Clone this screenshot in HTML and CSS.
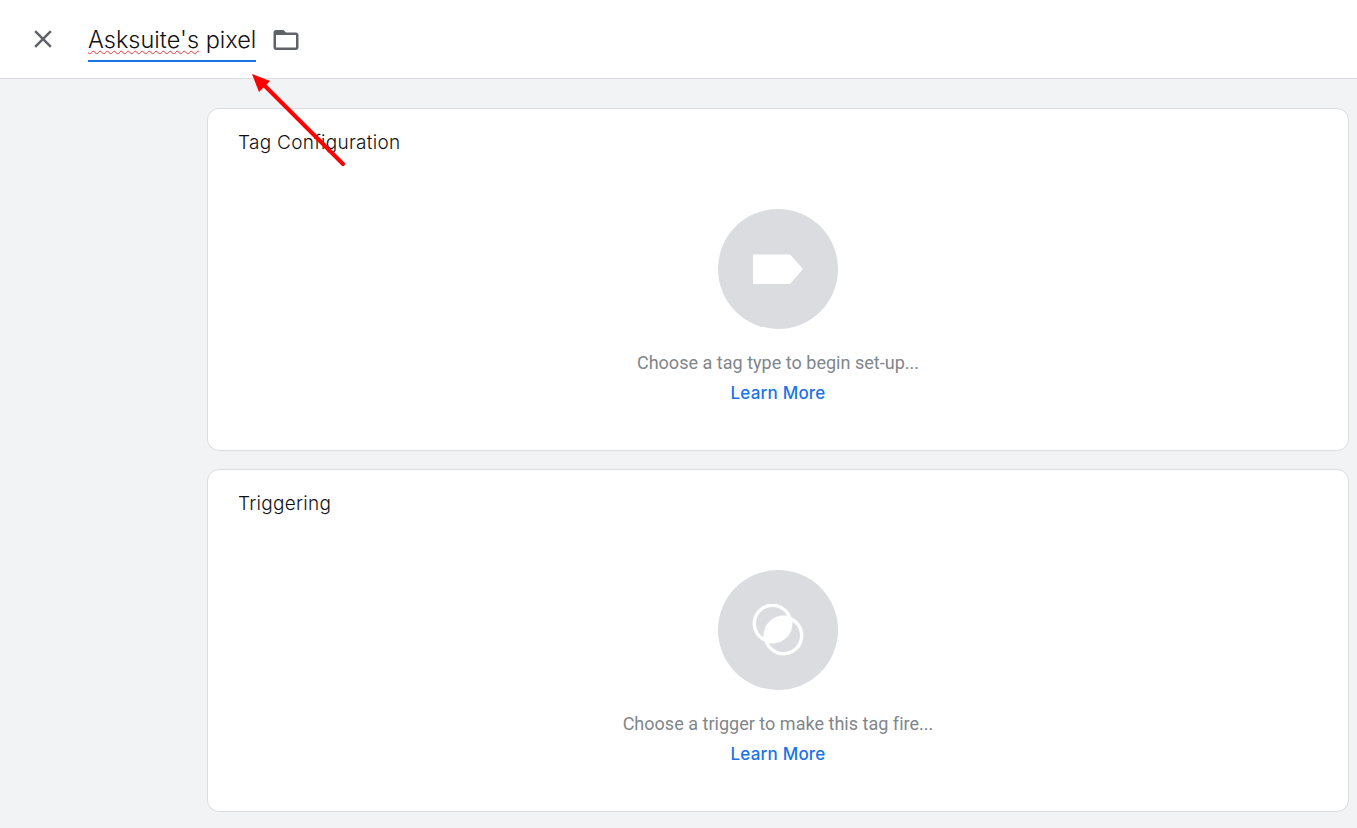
FILE: index.html
```html
<!DOCTYPE html>
<html lang="en">
<head>
<meta charset="utf-8">
<title>Asksuite's pixel</title>
<link rel="stylesheet" href="styles.css">
</head>
<body>
<header class="topbar">
  <svg class="close-icon" width="30" height="30" viewBox="0 0 24 24"><path d="M19 6.41 17.59 5 12 10.59 6.41 5 5 6.41 10.59 12 5 17.59 6.41 19 12 13.41 17.59 19 19 17.59 13.41 12z"/></svg>
  <div class="name-field"><span class="misspelt">Asksuite's</span> pixel</div>
  <svg class="folder-icon" width="30" height="30" viewBox="0 0 24 24"><path d="M20 6h-8l-2-2H4c-1.100 0-1.990.9-1.990 2L2 18c0 1.100.9 2 2 2h16c1.100 0 2-.9 2-2V8c0-1.100-.9-2-2-2zm0 12H4V8h16v10z"/></svg>
</header>
<main class="content">
  <section class="card">
    <h2 class="card-title">Tag Configuration</h2>
    <div class="placeholder">
      <div class="circle">
        <svg width="52" height="32" viewBox="0 0 52 32"><path class="solid" d="M1 1.500H38L51 16 38 31H1Z"/></svg>
      </div>
      <p class="hint">Choose a tag type to begin set-up...</p>
      <a class="learn" href="#">Learn More</a>
    </div>
  </section>
  <section class="card">
    <h2 class="card-title">Triggering</h2>
    <div class="placeholder">
      <div class="circle">
        <svg width="52" height="52" viewBox="0 0 52 52"><path class="solid" d="M38 14.500A18.200 18.200 0 0 1 14 36.500 A18.200 18.200 0 0 1 38 14.500Z"/><circle class="ring" cx="20.500" cy="19.500" r="18.200"/><circle class="ring" cx="31.500" cy="31.500" r="18.200"/></svg>
      </div>
      <p class="hint">Choose a trigger to make this tag fire...</p>
      <a class="learn" href="#">Learn More</a>
    </div>
  </section>
</main>
<svg class="arrow" width="110" height="110" viewBox="0 0 110 110"><path class="arrow-line" d="M92 91 12 11"/><path class="arrow-head" d="M1 1 19 8 8 19Z"/></svg>
</body>
</html>
```
FILE: styles.css
```css
* { box-sizing: border-box; }
html, body { margin: 0; height: 100%; }
body {
  background: #f1f3f4;
  font-family: "Roboto", "Liberation Sans", sans-serif;
  overflow: hidden;
  position: relative;
}
.topbar {
  height: 79px;
  background: #fff;
  border-bottom: 1px solid #dadce0;
  display: flex;
  align-items: center;
  padding-left: 28px;
}
.close-icon { fill: #5f6368; margin-right: 30px; flex: none; }
.name-field {
  font-family: "Inter", sans-serif;
  font-weight: 350;
  font-size: 23.5px;
  line-height: 32px;
  color: #111214;
  height: 46px;
  padding-top: 8px;
  border-bottom: 2px solid #1a73e8;
  margin-top: -1px;
}
.misspelt {
  text-decoration: underline wavy #e53935 1px;
  text-underline-offset: 2px;
}
.folder-icon { fill: #5f6368; margin-left: 15px; margin-top: 2px; flex: none; }
.content {
  display: flex;
  flex-direction: column;
  gap: 18px;
  padding: 29px 8px 0 207px;
}
.card {
  height: 343px;
  background: #fff;
  border: 1px solid #dadce0;
  border-radius: 12px;
  padding: 21px 30px 0;
}
.card-title {
  margin: 0;
  font-family: "Inter", sans-serif;
  font-weight: 350;
  font-size: 19px;
  line-height: 26px;
  letter-spacing: 0.28px;
  color: #111214;
}
.placeholder {
  display: flex;
  flex-direction: column;
  align-items: center;
  margin-top: 53px;
}
.circle {
  width: 120px;
  height: 120px;
  border-radius: 50%;
  background: #dadce0;
  display: flex;
  align-items: center;
  justify-content: center;
}
.solid { fill: #fff; }
.ring { fill: none; stroke: #fff; stroke-width: 3.5px; }
.hint {
  margin: 22px 0 0;
  font-size: 18px;
  line-height: 24px;
  letter-spacing: 0.02px;
  color: #80868b;
}
.learn {
  margin-top: 6px;
  font-family: "Inter", sans-serif;
  font-size: 17px;
  line-height: 24px;
  font-weight: 500;
  letter-spacing: 0.2px;
  color: #1a73e8;
  text-decoration: none;
}
.arrow { position: absolute; left: 251px; top: 73px; }
.arrow-line { stroke: #ff0000; stroke-width: 4px; stroke-linecap: round; fill: none; }
.arrow-head { fill: #ff0000; }
```
